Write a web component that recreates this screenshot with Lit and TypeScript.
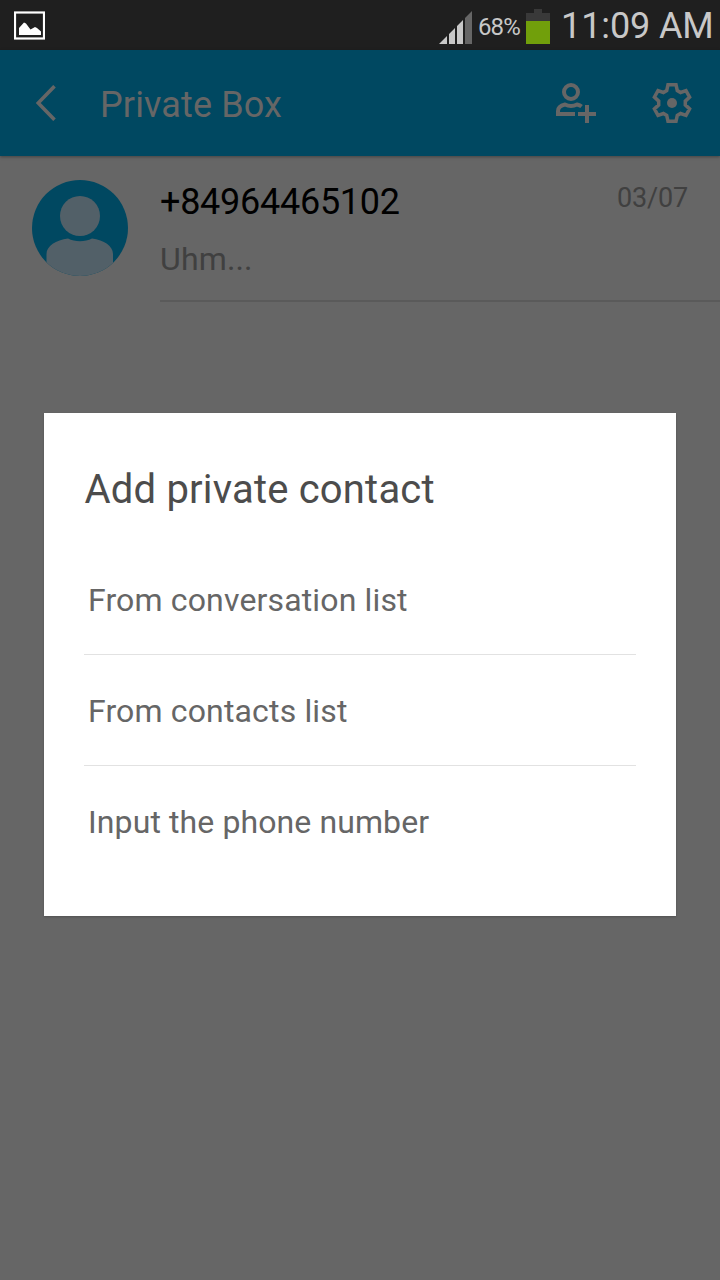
import { LitElement, html, css } from "lit";
import { customElement, property } from "lit/decorators.js";

@customElement("status-bar")
class StatusBar extends LitElement {
  static styles = css`
    :host { display: flex; height: 50px; background: #1f1f1f; color: #c8c8c8; align-items: flex-start; box-sizing: border-box; padding-left: 14px; }
    svg { display: block; flex: none; }
    .photo { margin-top: 11px; }
    .gap { flex: 1; }
    .signal { margin-top: 11px; }
    .percent { font-size: 24px; line-height: 28px; margin-top: 13px; width: 43px; margin-left: 6px; letter-spacing: -0.9px; white-space: nowrap; }
    .battery { margin: 9px 0 0 5px; }
    .clock { font-size: 36px; line-height: 42px; margin-top: 5px; margin-left: 11px; width: 159px; white-space: nowrap; letter-spacing: -0.1px; }
  `;
  render() {
    return html`
      <svg class="photo" width="31" height="29" viewBox="0 0 31 29">
        <rect x="1" y="1.5" width="29" height="26" fill="none" stroke="#fff" stroke-width="2.2"/>
        <path d="M5 24V17L10 11.5L12 12.5L16.5 18.5L21 16L23 17L27 20.5V24Z" fill="#fff"/>
      </svg>
      <span class="gap"></span>
      <svg class="signal" width="33" height="33" viewBox="0 0 33 33">
        <path d="M0 33L8 25V33ZM10 23L16 17V33H10ZM18 15L24 9V33H18Z" fill="#c8c8c8"/>
        <path d="M26 7L33 0V33H26Z" fill="#666"/>
      </svg>
      <span class="percent">68%</span>
      <svg class="battery" width="24" height="35" viewBox="0 0 24 35">
        <path d="M8 0H16V4H24V12H0V4H8Z" fill="#393939"/>
        <path d="M0 12H24V35H0Z" fill="#719f0b"/>
      </svg>
      <span class="clock">11:09 AM</span>`;
  }
}

@customElement("title-bar")
class TitleBar extends LitElement {
  static styles = css`
    :host { display: flex; height: 106px; background: #004861; color: #666; align-items: center; box-sizing: border-box; padding: 0 28px 0 36px; box-shadow: 0 1px 3px rgba(0,0,0,.35); position: relative; }
    svg { display: block; flex: none; }
    .title { flex: 1; margin-left: 44px; font-size: 36px; line-height: 42px; padding-top: 3px; white-space: nowrap; letter-spacing: 0.12px; }
    .gear { margin-left: 56px; }
  `;
  render() {
    return html`
      <svg width="20" height="36" viewBox="0 0 20 36"><path d="M18.5 1.2L2.2 18L18.5 34.8" fill="none" stroke="#666" stroke-width="3.6"/></svg>
      <span class="title">Private Box</span>
      <svg width="40" height="40" viewBox="0 0 40 40">
        <g fill="none" stroke="#666" stroke-width="4">
          <circle cx="15" cy="9" r="7"/>
          <path d="M19 31H2V28C2 24.5 5 22.5 9 21.5C13 23.5 17 23.5 21 21.5C23 22 24.6 22.7 25.6 23.5"/>
          <path d="M31 22V40M22 31H40"/>
        </g>
      </svg>
      <svg class="gear" width="40" height="40" viewBox="0 0 40 40">
        <path d="M16 1.7H24L25.3 7.6L28.6 9.5L34 7.7L37.6 14.1L33.3 18.1V21.9L37.6 25.9L34 32.3L28.6 30.5L25.3 32.4L24 38.3H16L14.7 32.4L11.4 30.5L6 32.3L2.4 25.9L6.7 21.9V18.1L2.4 14.1L6 7.7L11.4 9.5L14.7 7.6Z" fill="none" stroke="#666" stroke-width="3.5"/>
        <circle cx="20" cy="20" r="5" fill="#666"/>
      </svg>`;
  }
}

@customElement("conversation-row")
class ConversationRow extends LitElement {
  @property() name = "";
  @property() preview = "";
  @property() date = "";
  static styles = css`
    :host { display: flex; height: 146px; padding-left: 32px; box-sizing: border-box; }
    .avatar { display: block; flex: none; margin: 24px 32px 0 0; }
    .body { flex: 1; box-sizing: border-box; border-bottom: 2px solid #5a5a5a; padding: 25px 32px 0 0; }
    .head { display: flex; justify-content: space-between; }
    .name { font-size: 36px; line-height: 42px; color: #000; white-space: nowrap; letter-spacing: -0.27px; }
    .date { font-size: 27px; line-height: 32px; margin-top: 1px; color: #404040; white-space: nowrap; letter-spacing: -0.15px; }
    .preview { font-size: 32px; line-height: 38px; margin-top: 17px; color: #404040; letter-spacing: 0.15px; }
  `;
  render() {
    return html`
      <svg class="avatar" width="96" height="96" viewBox="0 0 96 96">
        <defs><clipPath id="disc"><circle cx="48" cy="48" r="48"/></clipPath></defs>
        <g clip-path="url(#disc)">
          <rect width="96" height="96" fill="#004861"/>
          <circle cx="48" cy="36" r="20" fill="#526068"/>
          <path d="M14.5 96V74C14.5 66 24 60 36 58.5C43 62 53 62 60 58.5C72 60 81 66 81 74V96Z" fill="#526068"/>
        </g>
      </svg>
      <div class="body">
        <div class="head"><span class="name">${this.name}</span><span class="date">${this.date}</span></div>
        <div class="preview">${this.preview}</div>
      </div>`;
  }
}

@customElement("choice-dialog")
class ChoiceDialog extends LitElement {
  static styles = css`
    :host { display: block; box-sizing: border-box; width: 632px; height: 503px; background: #fff; padding: 0 40px; box-shadow: 0 1px 2px rgba(0,0,0,.2); }
    .title { height: 131px; box-sizing: border-box; padding: 53px 0 0 0.5px; font-size: 40px; line-height: 47px; color: #4c4c4c; white-space: nowrap; letter-spacing: 0.19px; }
    .item { height: 111px; box-sizing: border-box; border-bottom: 1px solid #e2e2e2; padding: 37px 0 0 4px; font-size: 32px; line-height: 38px; color: #666; white-space: nowrap; letter-spacing: 0.15px; }
    .item:last-child { border-bottom: 0; letter-spacing: 0.1px; }
  `;
  render() {
    const items = ["From conversation list", "From contacts list", "Input the phone number"];
    return html`<div class="title">Add private contact</div>
      ${items.map((t) => html`<div class="item"><span>${t}</span></div>`)}`;
  }
}

@customElement("app-root")
class AppRoot extends LitElement {
  static styles = css`
    :host { display: block; position: relative; width: 720px; height: 1280px; overflow: hidden; background: #666; font-family: Roboto, "Noto Sans", sans-serif; }
    .dialog { position: absolute; left: 44px; top: 413px; }
  `;
  render() {
    return html`
      <status-bar></status-bar>
      <title-bar></title-bar>
      <conversation-row name="+84964465102" preview="Uhm..." date="03/07"></conversation-row>
      <choice-dialog class="dialog"></choice-dialog>`;
  }
}
